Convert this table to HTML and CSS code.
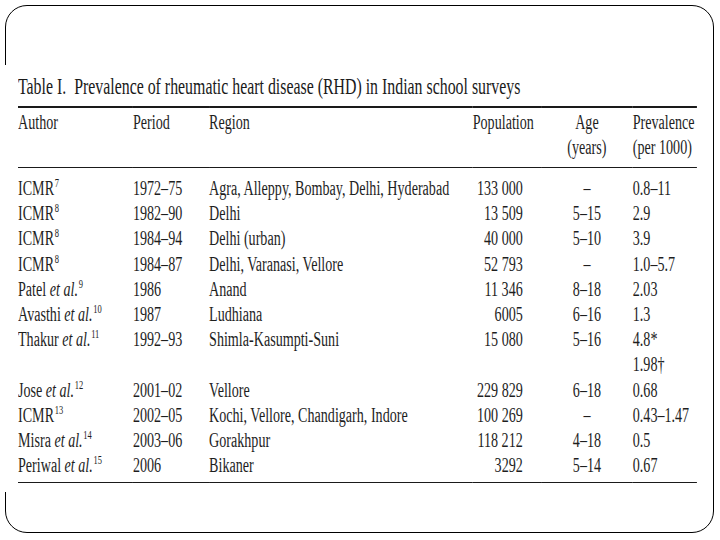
FILE: index.html
```html
<!DOCTYPE html>
<html lang="en">
<head>
<meta charset="utf-8">
<title>Prevalence of rheumatic heart disease in Indian school surveys</title>
<link rel="stylesheet" href="styles.css">
</head>
<body>
<div class="slide">
  <div class="figure">
    <div class="sheet">
      <p class="caption">Table I.&nbsp; Prevalence of rheumatic heart disease (RHD) in Indian school surveys</p>
      <table class="data">
        <colgroup>
          <col class="w-author">
          <col class="w-period">
          <col class="w-region">
          <col class="w-pop">
          <col class="w-age">
          <col class="w-prev">
        </colgroup>
        <thead>
          <tr>
            <th>Author</th>
            <th>Period</th>
            <th>Region</th>
            <th class="pop-h">Population</th>
            <th class="age">Age<br>(years)</th>
            <th>Prevalence<br>(per 1000)</th>
          </tr>
        </thead>
        <tbody>
          <tr class="first"><td>ICMR<sup>7</sup></td><td>1972–75</td><td>Agra, Alleppy, Bombay, Delhi, Hyderabad</td><td class="num">133 000</td><td class="age">–</td><td>0.8–11</td></tr>
          <tr><td>ICMR<sup>8</sup></td><td>1982–90</td><td>Delhi</td><td class="num">13 509</td><td class="age">5–15</td><td>2.9</td></tr>
          <tr><td>ICMR<sup>8</sup></td><td>1984–94</td><td>Delhi (urban)</td><td class="num">40 000</td><td class="age">5–10</td><td>3.9</td></tr>
          <tr><td>ICMR<sup>8</sup></td><td>1984–87</td><td>Delhi, Varanasi, Vellore</td><td class="num">52 793</td><td class="age">–</td><td>1.0–5.7</td></tr>
          <tr><td>Patel <em>et al.</em><sup>9</sup></td><td>1986</td><td>Anand</td><td class="num">11 346</td><td class="age">8–18</td><td>2.03</td></tr>
          <tr><td>Avasthi <em>et al.</em><sup>10</sup></td><td>1987</td><td>Ludhiana</td><td class="num">6005</td><td class="age">6–16</td><td>1.3</td></tr>
          <tr><td>Thakur <em>et al.</em><sup>11</sup></td><td>1992–93</td><td>Shimla-Kasumpti-Suni</td><td class="num">15 080</td><td class="age">5–16</td><td>4.8*</td></tr>
          <tr><td></td><td></td><td></td><td class="num"></td><td class="age"></td><td>1.98†</td></tr>
          <tr><td>Jose <em>et al.</em><sup>12</sup></td><td>2001–02</td><td>Vellore</td><td class="num">229 829</td><td class="age">6–18</td><td>0.68</td></tr>
          <tr><td>ICMR<sup>13</sup></td><td>2002–05</td><td>Kochi, Vellore, Chandigarh, Indore</td><td class="num">100 269</td><td class="age">–</td><td>0.43–1.47</td></tr>
          <tr><td>Misra <em>et al.</em><sup>14</sup></td><td>2003–06</td><td>Gorakhpur</td><td class="num">118 212</td><td class="age">4–18</td><td>0.5</td></tr>
          <tr class="last"><td>Periwal <em>et al.</em><sup>15</sup></td><td>2006</td><td>Bikaner</td><td class="num">3292</td><td class="age">5–14</td><td>0.67</td></tr>
        </tbody>
      </table>
    </div>
  </div>
</div>
</body>
</html>
```

FILE: styles.css
```css
html, body {
  margin: 0;
  padding: 0;
  background: #ffffff;
}

body {
  width: 720px;
  height: 540px;
  overflow: hidden;
  font-family: "Liberation Serif", "Times New Roman", serif;
  color: #1e1e1e;
}

.slide {
  box-sizing: border-box;
  margin: 5px 0 0 5px;
  width: 709px;
  height: 528px;
  border: 1.5px solid #000000;
  border-radius: 22px;
  padding-top: 58.5px;
}

.figure {
  box-sizing: border-box;
  margin-left: -4px;
  width: 705px;
  height: 427px;
  background: #ffffff;
  padding: 8px 0 0 15.5px;
  overflow: hidden;
}

.sheet {
  width: 963px;
  transform: scaleX(0.705);
  transform-origin: 0 0;
}

.caption {
  margin: 0 0 5px 0;
  font-size: 22.5px;
  line-height: 28px;
  white-space: nowrap;
  color: #1a1a1a;
}

.data {
  width: 963px;
  table-layout: fixed;
  border-collapse: collapse;
  border-top: 2px solid #1a1a1a;
  border-bottom: 1px solid #1a1a1a;
  font-size: 20px;
}

.w-author { width: 163px; }
.w-period { width: 108px; }
.w-region { width: 374px; }
.w-pop { width: 97px; }
.w-age { width: 130px; }
.w-prev { width: 91px; }

.data thead tr {
  border-bottom: 1px solid #1a1a1a;
}

.data th {
  font-weight: normal;
  text-align: left;
  vertical-align: top;
  line-height: 25px;
  padding: 2.5px 0 6.5px 0;
  white-space: nowrap;
}

.data td {
  padding: 0;
  line-height: 25.2px;
  height: 25.2px;
  white-space: nowrap;
  vertical-align: top;
}

.data tr.first td {
  padding-top: 8.5px;
}

.data tr.last td {
  padding-bottom: 4px;
}

.data .num {
  text-align: right;
  padding-right: 26px;
}

.data .pop-h {
  text-align: left;
}

.data .age {
  text-align: center;
}

.data em {
  font-style: italic;
}

.data sup {
  font-size: 12px;
  line-height: 0;
  vertical-align: 8px;
  margin-left: 1px;
}
```
